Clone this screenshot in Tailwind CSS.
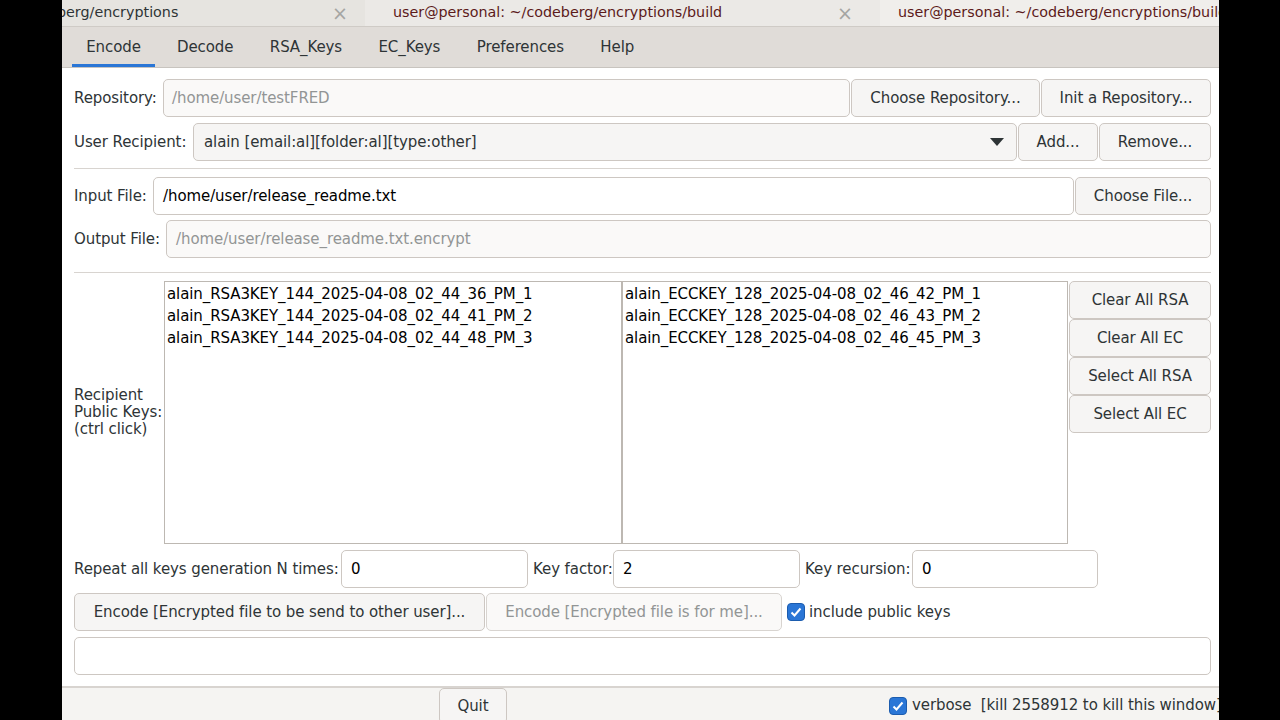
<!DOCTYPE html>
<html lang="en">
<head>
<meta charset="UTF-8">
<title>Encryptions</title>
<script src="https://cdn.jsdelivr.net/npm/@tailwindcss/browser@4"></script>
</head>
<body class="bg-black w-[1280px] h-[720px] overflow-hidden font-['DejaVu_Sans',sans-serif] text-[15px] tracking-[-0.09px] text-[#2e3436]">
<div class="ml-[62px] w-[1157px] h-[720px] flex flex-col overflow-hidden">
    <!-- terminal tabs -->
    <div class="h-[27px] shrink-0 flex bg-[#ebe9e6] border-b border-[#cfcbc6] text-[14.3px] tracking-normal text-[#5c1a1a]">
        <div class="w-[303px] flex items-center justify-between pr-[17px] bg-[#e6e4e0] overflow-hidden">
            <span class="text-[#2e3436] whitespace-nowrap ml-[-5px]">berg/encryptions</span>
            <span class="text-[#a5a5a3] text-[19px] leading-none">×</span>
        </div>
        <div class="w-[515px] flex items-center justify-between pl-[28px] pr-[27px] bg-[#ebe9e6]">
            <span class="whitespace-nowrap">user@personal: ~/codeberg/encryptions/build</span>
            <span class="text-[#a5a5a3] text-[19px] leading-none">×</span>
        </div>
        <div class="flex-1 flex items-center pl-[18px] overflow-hidden bg-[#f0eeeb]">
            <span class="whitespace-nowrap">user@personal: ~/codeberg/encryptions/build</span>
        </div>
    </div>

    <!-- notebook tabs -->
    <div class="h-[41px] shrink-0 flex items-stretch gap-[36.4px] pl-[10px] bg-[#e0dcd8] border-b border-[#c8c4bf]">
        <div class="w-[83px] mr-[-14.4px] flex items-center justify-center border-b-[3px] border-[#2a76d6] pt-[3px]">Encode</div>
        <div class="flex items-center">Decode</div>
        <div class="flex items-center">RSA_Keys</div>
        <div class="flex items-center">EC_Keys</div>
        <div class="flex items-center">Preferences</div>
        <div class="flex items-center">Help</div>
    </div>

    <!-- main page -->
    <div class="flex-1 bg-white pl-[12px] pr-[8px] pt-[11px] flex flex-col min-h-0">
        <div class="flex items-center h-[38px]">
            <span class="w-[89px] whitespace-nowrap">Repository:</span>
            <div class="w-[687px] h-full flex items-center px-[8px] rounded-[5px] border border-[#cdc7c2] bg-[#faf9f8] text-[#929595]">/home/user/testFRED</div>
            <button class="w-[189px] ml-[1px] h-full rounded-[5px] border border-[#cdc7c2] bg-[#f6f5f4]">Choose Repository...</button>
            <button class="w-[170px] ml-[1px] h-full rounded-[5px] border border-[#cdc7c2] bg-[#f6f5f4]">Init a Repository...</button>
        </div>
        <div class="flex items-center h-[38px] mt-[6px]">
            <span class="w-[119px] whitespace-nowrap">User Recipient:</span>
            <div class="w-[824px] h-full flex items-center justify-between pl-[10px] pr-[12px] rounded-[5px] border border-[#cdc7c2] bg-[#f6f5f4]">
                <span>alain [email:al][folder:al][type:other]</span>
                <svg width="14" height="8" viewBox="0 0 14 8"><path d="M0 0h14L7 8z" fill="#2e3436"/></svg>
            </div>
            <button class="w-[80px] ml-[1px] h-full rounded-[5px] border border-[#cdc7c2] bg-[#f6f5f4]">Add...</button>
            <button class="w-[112px] ml-[1px] h-full rounded-[5px] border border-[#cdc7c2] bg-[#f6f5f4]">Remove...</button>
        </div>
        <div class="h-px bg-[#d8d4d0] mt-[7px]"></div>
        <div class="flex items-center h-[38px] mt-[8px]">
            <span class="w-[79px] whitespace-nowrap">Input File:</span>
            <div class="w-[921px] h-full flex items-center px-[9px] rounded-[5px] border border-[#cdc7c2] text-black">/home/user/release_readme.txt</div>
            <button class="w-[136px] ml-[1px] h-full rounded-[5px] border border-[#cdc7c2] bg-[#f6f5f4]">Choose File...</button>
        </div>
        <div class="flex items-center h-[38px] mt-[5px]">
            <span class="w-[92px] whitespace-nowrap pt-[1px]">Output File:</span>
            <div class="flex-1 h-full flex items-center px-[9px] pt-[1px] rounded-[5px] border border-[#cdc7c2] bg-[#faf9f8] text-[#929595]">/home/user/release_readme.txt.encrypt</div>
        </div>
        <div class="h-px bg-[#d8d4d0] mt-[14px]"></div>

        <!-- key lists -->
        <div class="flex h-[263px] mt-[8px]">
            <div class="w-[90px] flex flex-col justify-center leading-[17px]">
                <span>Recipient</span>
                <span class="whitespace-nowrap">Public Keys:</span>
                <span>(ctrl click)</span>
            </div>
            <div class="w-[458px] border border-[#bdb8b2] pl-[2px] pt-[1px] leading-[22px] text-black">
                <div>alain_RSA3KEY_144_2025-04-08_02_44_36_PM_1</div>
                <div>alain_RSA3KEY_144_2025-04-08_02_44_41_PM_2</div>
                <div>alain_RSA3KEY_144_2025-04-08_02_44_48_PM_3</div>
            </div>
            <div class="w-[446px] border border-[#bdb8b2] pl-[2px] pt-[1px] leading-[22px] text-black">
                <div>alain_ECCKEY_128_2025-04-08_02_46_42_PM_1</div>
                <div>alain_ECCKEY_128_2025-04-08_02_46_43_PM_2</div>
                <div>alain_ECCKEY_128_2025-04-08_02_46_45_PM_3</div>
            </div>
            <div class="w-[142px] ml-[1px] flex flex-col">
                <button class="h-[38px] rounded-[5px] border border-[#cdc7c2] bg-[#f6f5f4]">Clear All RSA</button>
                <button class="h-[38px] rounded-[5px] border border-[#cdc7c2] bg-[#f6f5f4]">Clear All EC</button>
                <button class="h-[38px] rounded-[5px] border border-[#cdc7c2] bg-[#f6f5f4]">Select All RSA</button>
                <button class="h-[38px] rounded-[5px] border border-[#cdc7c2] bg-[#f6f5f4]">Select All EC</button>
            </div>
        </div>

        <div class="flex items-center h-[38px] mt-[6px]">
            <span class="w-[267px] whitespace-nowrap">Repeat all keys generation N times:</span>
            <div class="w-[187px] h-full flex items-center px-[9px] rounded-[5px] border border-[#cdc7c2] text-black">0</div>
            <span class="ml-[5px] w-[80px] whitespace-nowrap">Key factor:</span>
            <div class="w-[187px] h-full flex items-center px-[9px] rounded-[5px] border border-[#cdc7c2] text-black">2</div>
            <span class="ml-[5px] w-[107px] whitespace-nowrap">Key recursion:</span>
            <div class="w-[186px] h-full flex items-center px-[9px] rounded-[5px] border border-[#cdc7c2] text-black">0</div>
        </div>
        <div class="flex items-center h-[38px] mt-[5px]">
            <button class="w-[411px] h-full rounded-[5px] border border-[#cdc7c2] bg-[#f6f5f4]">Encode [Encrypted file to be send to other user]...</button>
            <button class="w-[296px] ml-[1px] h-full rounded-[5px] border border-[#d8d4d0] bg-[#faf9f8] text-[#929595]">Encode [Encrypted file is for me]...</button>
            <svg class="ml-[5px]" width="18" height="18" viewBox="0 0 18 18"><rect x="0.5" y="0.5" width="17" height="17" rx="3.5" fill="#2a76d6" stroke="#1c5cae"/><path d="M4.5 9.5l3 3 6-7" fill="none" stroke="#fff" stroke-width="2"/></svg>
            <span class="ml-[4px]">include public keys</span>
        </div>
        <div class="h-[38px] mt-[6px] rounded-[5px] border border-[#cdc7c2]"></div>
    </div>

    <!-- footer -->
    <div class="h-[34px] shrink-0 flex bg-[#f5f4f2] border-t-2 border-[#d8d4d0]">
        <button class="ml-[377px] w-[68px] shrink-0 h-[36px] rounded-[5px] border border-[#cdc7c2] bg-[#f6f5f4]">Quit</button>
        <div class="ml-[382px] flex items-center h-full pt-[3px] shrink-0">
            <svg width="18" height="18" viewBox="0 0 18 18"><rect x="0.5" y="0.5" width="17" height="17" rx="3.5" fill="#2a76d6" stroke="#1c5cae"/><path d="M4.5 9.5l3 3 6-7" fill="none" stroke="#fff" stroke-width="2"/></svg>
            <span class="ml-[5px] whitespace-nowrap">verbose&nbsp; [kill 2558912 to kill this window]</span>
        </div>
    </div>
</div>
</body>
</html>
